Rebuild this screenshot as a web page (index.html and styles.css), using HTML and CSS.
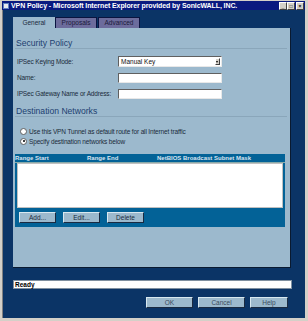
FILE: index.html
```html
<!DOCTYPE html>
<html>
<head>
<meta charset="utf-8">
<link rel="stylesheet" href="styles.css">
</head>
<body>
<div class="window">
  <div class="titlebar">
    <span class="ticon"></span>
    <span class="ttext">VPN Policy - Microsoft Internet Explorer provided by SonicWALL, INC.</span>
    <span class="tbtns"><span class="tb">_</span><span class="tb">□</span><span class="tb">×</span></span>
  </div>
  <div class="content">
    <div class="tabs">
      <div class="tab active">General</div>
      <div class="tab">Proposals</div>
      <div class="tab">Advanced</div>
    </div>
    <div class="panel">
      <div class="heading first">Security Policy</div>
      <div class="row r1"><span class="label">IPSec Keying Mode:</span><div class="select"><span>Manual Key</span><span class="arrow"></span></div></div>
      <div class="row r2"><span class="label">Name:</span><div class="input"></div></div>
      <div class="row r2"><span class="label">IPSec Gateway Name or Address:</span><div class="input"></div></div>
      <div class="heading second">Destination Networks</div>
      <div class="radio r-a"><span class="rb"></span>Use this VPN Tunnel as default route for all Internet traffic</div>
      <div class="radio r-b"><span class="rb on"></span>Specify destination networks below</div>
      <div class="table">
        <div class="thead"><span class="c1">Range Start</span><span class="c2">Range End</span><span class="c3">NetBIOS Broadcast Subnet Mask</span></div>
        <div class="list"></div>
        <div class="tbar"><span class="btn">Add...</span><span class="btn">Edit...</span><span class="btn">Delete</span></div>
      </div>
    </div>
    <div class="status">Ready</div>
    <div class="footer"><span class="btn big">OK</span><span class="btn big">Cancel</span><span class="btn big help">Help</span></div>
  </div>
</div>
</body>
</html>
```
FILE: styles.css
```css
html, body { margin: 0; padding: 0; }
body { width: 308px; height: 321px; overflow: hidden; font-family: "Liberation Sans", Arial, sans-serif; }
.window {
  width: 308px; height: 321px; box-sizing: border-box;
  border-left: 2px solid #d4d0c8; border-right: 3px solid #d4d0c8; border-bottom: 3px solid #d4d0c8; border-top: 1px solid #d4d0c8;
  box-shadow: inset 1px 0 0 #808080;
  background: #0b3466;
  display: flex; flex-direction: column;
}
.titlebar {
  height: 9px; background: #0a1a80; display: flex; align-items: center; color: #fff;
  font-size: 7px; font-weight: bold; line-height: 9px; padding-left: 1px;
}
.ticon { width: 6px; height: 6px; background: #e8e8f0; margin-right: 2px; border: 1px solid #6080c0; box-sizing: border-box; }
.ttext { flex: 1; white-space: nowrap; letter-spacing: -0.1px; }
.tbtns { display: flex; gap: 0; margin-right: 1px; }
.tb { width: 6px; height: 6px; background: #d4d0c8; color: #000; font-size: 5px; line-height: 6px; text-align: center; border: 1px solid; border-color: #fff #404040 #404040 #fff; margin-left: 0; }
.tb:last-child { margin-left: 1px; }
.content { flex: 1; padding: 7px 14px 0 11px; display: flex; flex-direction: column; }
.tabs { display: flex; height: 11px; }
.tab {
  width: 42px; height: 11px; box-sizing: border-box; background: #6c6c9c; color: #1a1a3a;
  font-size: 6.5px; line-height: 10px; text-align: center; border: 1px solid #0a1440; border-bottom: none; margin-right: 1px;
}
.tab.active { background: #9cb9cd; color: #1a2a40; border-color: #9cb9cd; margin-right: 0; }
.panel {
  height: 240px; background: #9cb9cd; box-sizing: border-box;
  border-right: 1px solid #0a1a30; border-bottom: 1px solid #0a1a30;
  padding: 0 3px 0 2px; display: flex; flex-direction: column; color: #1a2a3a;
}
.heading { color: #1d3f70; font-size: 8.6px; line-height: 10px; border-bottom: 1px solid #8aa6ba; padding-left: 1px; height: 10px; }
.heading.first { margin-top: 10px; }
.heading.second { margin-top: 7px; }
.row { display: flex; align-items: center; height: 11px; font-size: 6.5px; }
.row.r1 { margin-top: 7px; }
.row.r2 { margin-top: 5px; }
.label { width: 101px; padding-left: 2px; letter-spacing: -0.15px; }
.select, .input {
  width: 104px; height: 11px; box-sizing: border-box; background: #fff;
  border: 1px solid; border-color: #606060 #e8e8e8 #e8e8e8 #606060;
  display: flex; align-items: center; font-size: 6.5px; color: #101010;
}
.input { height: 10px; }
.select span:first-child { flex: 1; padding-left: 2px; }
.arrow { width: 5px; height: 7px; background: #d4d0c8; border: 1px solid; border-color: #fff #404040 #404040 #fff; box-sizing: border-box; margin-right: 1px; position: relative; }
.arrow::after { content: ""; position: absolute; left: 0px; top: 2px; border-left: 1.5px solid transparent; border-right: 1.5px solid transparent; border-top: 2px solid #000; }
.radio { display: flex; align-items: center; font-size: 6.5px; height: 8px; padding-left: 5px; letter-spacing: -0.15px; }
.radio.r-a { margin-top: 10px; }
.radio.r-b { margin-top: 2px; }
.rb { width: 5px; height: 5px; border-radius: 50%; background: #fff; border: 1px solid #606060; margin-right: 2px; position: relative; }
.rb.on::after { content: ""; position: absolute; left: 1.5px; top: 1.5px; width: 2px; height: 2px; border-radius: 50%; background: #000; }
.table { margin-top: 9px; width: 270px; background: #036297; display: flex; flex-direction: column; }
.thead { height: 8px; font-size: 6px; line-height: 8px; font-weight: bold; color: #d8e4f0; display: flex; border-bottom: 1px solid #8aa; }
.thead .c1 { width: 72px; }
.thead .c2 { width: 70px; }
.list { margin: 0 2px; height: 43px; background: #fff; border: 1px solid #c0c0c0; }
.tbar { height: 19px; display: flex; align-items: center; gap: 7px; padding-left: 4px; }
.btn {
  display: inline-block; width: 37px; height: 11px; box-sizing: border-box; background: #9cb9cd;
  border: 1px solid; border-color: #d8e8f0 #1a2a40 #1a2a40 #d8e8f0;
  font-size: 6.5px; line-height: 9px; text-align: center; color: #1a2a3a;
}
.status {
  margin-top: 12px; width: 279px; height: 9px; box-sizing: border-box; background: #fff;
  border: 1px solid #8090a0; font-size: 6.5px; font-weight: bold; line-height: 7px; padding-left: 1px; color: #000;
}
.footer { margin-top: 8px; display: flex; justify-content: flex-end; gap: 5px; padding-right: 4px; width: 279px; box-sizing: border-box; }
.btn.big { width: 47px; color: #3a4a5a; }
.btn.help { width: 38px; }
```
